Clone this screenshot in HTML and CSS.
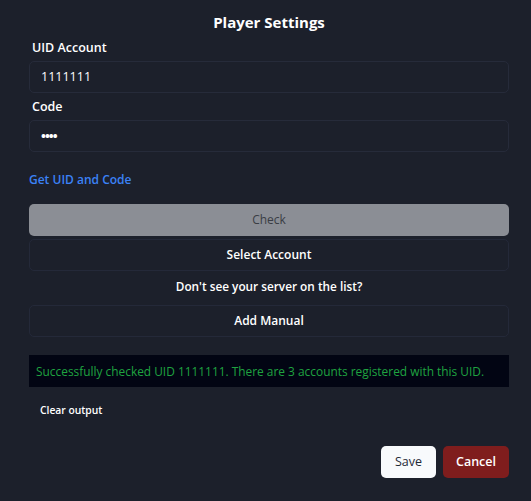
FILE: index.html
```html
<!DOCTYPE html>
<html>
<head>
<meta charset="utf-8">
<link rel="stylesheet" href="styles.css">
</head>
<body>
<div class="panel">
  <h1 class="title">Player Settings</h1>
  <label class="label">UID Account</label>
  <div class="input">1111111</div>
  <label class="label">Code</label>
  <div class="input dots">••••</div>
  <a class="link">Get UID and Code</a>
  <div class="btn check">Check</div>
  <div class="btn outline first">Select Account</div>
  <p class="hint">Don't see your server on the list?</p>
  <div class="btn outline">Add Manual</div>
  <div class="output">Successfully checked UID 1111111. There are 3 accounts registered with this UID.</div>
  <div class="clear">Clear output</div>
  <div class="actions">
    <div class="save">Save</div>
    <div class="cancel">Cancel</div>
  </div>
</div>
</body>
</html>
```
FILE: styles.css
```css
html, body {
  margin: 0;
  padding: 0;
  background: #1c202b;
  font-family: "Open Sans", "Noto Sans", sans-serif;
  color: #ffffff;
}
.panel {
  width: 480px;
  margin-left: 29px;
  display: flex;
  flex-direction: column;
}
.title {
  margin: 11px 0 0;
  font-size: 15px;
  font-weight: 700;
  text-align: center;
  line-height: 22px;
}
.label {
  font-size: 12.5px;
  font-weight: 600;
  margin: 6px 0 0 3px;
  line-height: 18px;
}
.input {
  margin-top: 4px;
  height: 30px;
  border: 1px solid #262b3a;
  border-radius: 5px;
  padding-left: 11px;
  font-size: 12.5px;
  line-height: 30px;
  box-sizing: content-box;
}
.label + .input + .label {
  margin-top: 5px;
}
.dots {
  font-size: 13px;
  font-weight: 700;
  letter-spacing: -1px;
}
.link {
  margin-top: 19px;
  color: #3b82f6;
  font-size: 12px;
  font-weight: 600;
  line-height: 18px;
}
.btn {
  height: 30px;
  border-radius: 5px;
  font-size: 12px;
  line-height: 30px;
  text-align: center;
  font-weight: 600;
}
.check {
  margin-top: 15px;
  height: 32px;
  line-height: 32px;
  background: #8b8e95;
  color: #3a3d44;
  font-weight: 400;
}
.outline {
  border: 1px solid #242939;
  color: #ffffff;
}
.first {
  margin-top: 3px;
}
.hint {
  margin: 6px 0 0;
  text-align: center;
  font-size: 11.8px;
  font-weight: 600;
  line-height: 18px;
}
.hint + .outline {
  margin-top: 10px;
}
.output {
  margin-top: 18px;
  height: 32px;
  line-height: 32px;
  background: #020513;
  color: #1fa340;
  font-size: 11.9px;
  padding-left: 7px;
}
.clear {
  margin: 15px 0 0 11px;
  font-size: 10.3px;
  font-weight: 600;
  line-height: 16px;
}
.actions {
  margin-top: 28px;
  display: flex;
  justify-content: flex-end;
  gap: 7px;
}
.save, .cancel {
  height: 32px;
  line-height: 32px;
  border-radius: 5px;
  font-size: 12.5px;
  text-align: center;
}
.save {
  width: 55px;
  background: #f8fafc;
  color: #1f2937;
}
.cancel {
  width: 66px;
  background: #7f1d1d;
  color: #ffffff;
  font-weight: 600;
}
```
